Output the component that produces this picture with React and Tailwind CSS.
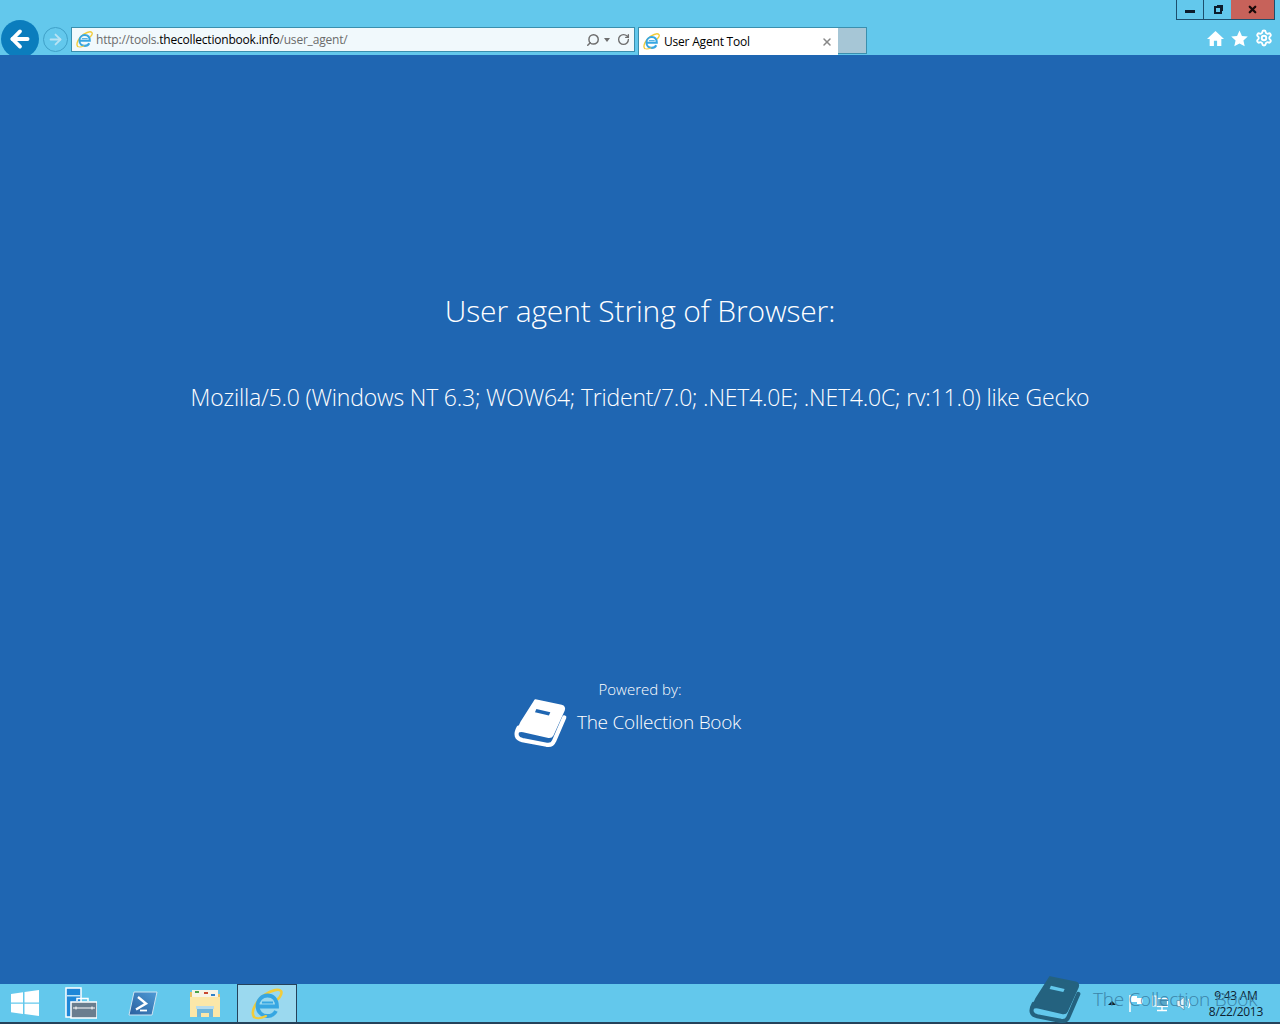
import React from 'react';
import { Search, RotateCw, X, Settings, ArrowLeft, ArrowRight } from 'lucide-react';

const uiFont = "font-['Open_Sans','Noto_Sans',sans-serif]";

const IeIcon = ({ className }) => (
  <svg viewBox="0 0 32 32" className={className}>
    <path d="M3 29 C-1 23 6 12 14 6.500 C21 2 28 0.500 30 3 C31.500 5 29 9 27 11" fill="none" stroke="#f2cc3a" strokeWidth="2.600" strokeLinecap="round" />
    <path d="M7 18.500 H26 C26 11 21.500 7.500 16.500 7.500 C11 7.500 6.500 12 6.500 18 C6.500 24 11 28 16.500 28 C20.500 28 23.500 26 25 23" fill="none" stroke="#36a6e2" strokeWidth="3.800" />
    <path d="M11 14.500 H22" stroke="#36a6e2" strokeWidth="2" />
    <path d="M3 29 C6 31 11 30 15 28" fill="none" stroke="#f2cc3a" strokeWidth="2" strokeLinecap="round" />
  </svg>
);

const BookLogo = ({ className, color, bg }) => (
  <svg viewBox="0 0 64 58" className={className}>
    <path d="M26 5.500 L54 11.500 Q58 12.500 56.500 16.500 L44.500 43 Q43 46 39 45 L13 39 Q8 38 5.500 41 L11 29 Z" fill={color} stroke={color} strokeWidth="2" strokeLinejoin="round" />
    <path d="M27 15 L42 18.500 L40.500 22 L25.500 18.500 Z" fill={bg} />
    <path d="M8 35 Q2 46 12 48.500 L38 53.500 Q44 54.500 46 49.500 L57 24" fill="none" stroke={color} strokeWidth="4.500" strokeLinecap="round" />
  </svg>
);

const WindowsLogo = () => (
  <svg viewBox="0 0 28 26" className="w-[28px] h-[26px]">
    <path d="M0 4 L12 2.200 V12.400 H0 Z M13.500 2 L28 0 V12.400 H13.500 Z M0 13.800 H12 V24 L0 22.200 Z M13.500 13.800 H28 V26 L13.500 24 Z" fill="#fff" />
  </svg>
);

const ServerManager = () => (
  <svg viewBox="0 0 32 32" className="w-[32px] h-[32px]">
    <rect x="1" y="1" width="15" height="29" fill="#1f87d8" stroke="#fff" strokeWidth="1.500" />
    <rect x="2" y="8" width="13" height="1.500" fill="#bfe4f7" />
    <path d="M12 14 V11.500 H23 V14" fill="none" stroke="#fff" strokeWidth="1.500" />
    <rect x="6" y="15" width="26" height="16" fill="#6a7d8e" stroke="#fff" strokeWidth="1.500" />
    <path d="M8 21 H30" stroke="#fff" strokeWidth="1" />
    <path d="M11 19.500 V22.500 M27 19.500 V22.500" stroke="#fff" strokeWidth="1" />
  </svg>
);

const PowerShell = () => (
  <svg viewBox="0 0 30 25" className="w-[30px] h-[25px]">
    <defs>
      <linearGradient id="psFill" x1="0" y1="1" x2="1" y2="0">
        <stop offset="0" stopColor="#2a5f9e" />
        <stop offset="1" stopColor="#4f9bd6" />
      </linearGradient>
    </defs>
    <path d="M6 1 H29 L24 24 H1 Z" fill="url(#psFill)" stroke="#cfe4f2" strokeWidth="1" />
    <path d="M10 6 L18 12.500 L8 18.500" fill="none" stroke="#fff" strokeWidth="2.400" />
    <path d="M12 19.500 H19" stroke="#fff" strokeWidth="1.800" />
  </svg>
);

const ExplorerIcon = () => (
  <svg viewBox="0 0 32 30" className="w-[32px] h-[30px]">
    <path d="M1 4 H11 L13 6 H31 V29 H1 Z" fill="#e9c063" />
    <rect x="3" y="2" width="26" height="8" fill="#f6f3e6" />
    <rect x="6" y="3" width="4" height="2" fill="#4aa34a" />
    <rect x="15" y="4" width="4" height="2" fill="#c9472e" />
    <rect x="22" y="6" width="4" height="2" fill="#2f82c9" />
    <path d="M1 9 H31 V29 H1 Z" fill="#fbe7a8" />
    <path d="M8 29 V21 H24 V29 H20 V25 H12 V29 Z" fill="#6fb7dc" />
    <rect x="7" y="18" width="18" height="3" fill="#b5dcee" />
  </svg>
);

const TrayFlag = () => (
  <svg viewBox="0 0 16 18" className="w-[16px] h-[18px]">
    <path d="M2 1 V18" stroke="#fff" strokeWidth="1.500" />
    <path d="M3 2 H9 V4 H15 V10 H9 V8 H3 Z" fill="#fff" />
  </svg>
);

const TrayNetwork = () => (
  <svg viewBox="0 0 16 17" className="w-[16px] h-[17px]">
    <path d="M1 1 H4 V11 H1 Z" fill="none" stroke="#fff" strokeWidth="1.200" />
    <rect x="5.500" y="3.500" width="10" height="8" fill="#5aa9c9" stroke="#fff" strokeWidth="1.200" />
    <path d="M10 12 V15 M5 15.500 H15" stroke="#fff" strokeWidth="1.400" />
  </svg>
);

const TraySound = () => (
  <svg viewBox="0 0 17 17" className="w-[17px] h-[17px]">
    <path d="M1 5.500 H4 L8 2 V15 L4 11.500 H1 Z" fill="#e8f4fa" stroke="#4a7f9a" strokeWidth="0.600" />
    <path d="M10 5.500 Q12 8.500 10 11.500 M12.500 4 Q15 8.500 12.500 13" fill="none" stroke="#fff" strokeWidth="1.200" />
  </svg>
);

const Toolbar = () => (
  <div className="flex items-start h-[35px] relative">
    {/* back button is cut off by the page below */}
    <div className="ml-px w-[38px] h-[35px] overflow-hidden shrink-0">
      <div className="w-[38px] h-[38px] rounded-full bg-[#0b7dbd] flex items-center justify-center">
        <ArrowLeft className="w-[26px] h-[26px] text-white" strokeWidth={3.5} />
      </div>
    </div>
    <div className="ml-[4px] mt-[7px] w-[25px] h-[25px] rounded-full border border-[#3fa0c8] flex items-center justify-center shrink-0">
      <ArrowRight className="w-[17px] h-[17px] text-[#b9e3f3]" strokeWidth={2.5} />
    </div>
    <div className="ml-[3px] mt-[7px] w-[564px] h-[25px] bg-[#f1f9fc] border border-[#3a8fae] flex items-center shrink-0">
      <IeIcon className="ml-[4px] w-[17px] h-[17px]" />
      <span className="ml-[3px] text-[12px] text-[#6b6b6b] whitespace-nowrap tracking-[-0.2px]">
        http://tools.<span className="text-black">thecollectionbook.info</span>/user_agent/
      </span>
      <div className="ml-auto flex items-center text-[#6e6e6e]">
        <Search className="w-[14px] h-[14px] -scale-x-100" strokeWidth={2.5} />
        <span className="ml-[4px] w-0 h-0 border-x-[3.500px] border-x-transparent border-t-[4px] border-t-[#6e6e6e]" />
        <RotateCw className="ml-[7px] mr-[4px] w-[13px] h-[13px]" strokeWidth={2.5} />
      </div>
    </div>
    <div className="ml-[3px] mt-[7px] w-[200px] h-[28px] bg-white border-l border-t border-[#3a8fae] flex items-center shrink-0">
      <IeIcon className="ml-[4px] w-[17px] h-[17px]" />
      <span className="ml-[4px] text-[12px] text-black whitespace-nowrap tracking-[-0.2px]">User Agent Tool</span>
      <X className="ml-auto mr-[5px] w-[12px] h-[12px] text-[#888]" strokeWidth={3} />
    </div>
    <div className="mt-[7px] w-[29px] h-[27px] bg-[#a6c6d6] border border-l-0 border-[#3a8fae] shrink-0" />
    <div className="ml-auto mr-[7px] mt-[9px] flex items-center gap-[7px]">
      <svg viewBox="0 0 16 16" className="w-[17px] h-[17px]">
        <path d="M8 1 L16 8.500 H13.500 V15 H9.500 V10 H6.500 V15 H2.500 V8.500 H0 Z" fill="#fff" />
      </svg>
      <svg viewBox="0 0 16 16" className="w-[17px] h-[17px]">
        <path d="M8 0.500 L10.300 5.600 L15.800 6.200 L11.700 9.900 L12.900 15.400 L8 12.600 L3.100 15.400 L4.300 9.900 L0.200 6.200 L5.700 5.600 Z" fill="#fff" />
      </svg>
      <Settings className="w-[18px] h-[18px] text-white" strokeWidth={2.5} />
    </div>
  </div>
);

const WindowControls = () => (
  <div className="flex justify-end pr-[5px] h-[20px]">
    <div className="flex h-[20px] border border-t-0 border-[#1c4f6e]">
      <div className="w-[27px] flex items-center justify-center border-r border-[#1c4f6e]">
        <span className="w-[10px] h-[3px] mt-[3px] bg-[#0c1c2c]" />
      </div>
      <div className="w-[27px] flex items-center justify-center">
        <span className="w-[8px] h-[8px] border-2 border-[#0c1c2c] shadow-[2px_-2px_0_-1px_#0c1c2c]" />
      </div>
      <div className="w-[43px] bg-[#c7625a] flex items-center justify-center">
        <X className="w-[11px] h-[11px] text-[#1a0a0a]" strokeWidth={5} />
      </div>
    </div>
  </div>
);

const Taskbar = () => (
  <div className="h-[40px] bg-[#63c8ec] border-b-2 border-[#25425a] flex items-stretch gap-[2px] relative">
    <div className="w-[49px] flex items-center justify-center">
      <WindowsLogo />
    </div>
    <div className="w-[60px] flex items-center justify-center">
      <ServerManager />
    </div>
    <div className="w-[60px] flex items-center justify-center">
      <PowerShell />
    </div>
    <div className="w-[60px] flex items-center justify-center">
      <ExplorerIcon />
    </div>
    <div className="w-[60px] flex items-center justify-center bg-[#9bd9ef] border-x border-t border-[#25425a]">
      <IeIcon className="w-[32px] h-[32px]" />
    </div>
    <div className="ml-auto mr-[17px] flex items-center">
      <span className="w-0 h-0 border-x-[4px] border-x-transparent border-b-[4px] border-b-[#10202c]" />
      <div className="ml-[12px] flex items-center gap-[8px]">
        <TrayFlag />
        <TrayNetwork />
        <TraySound />
      </div>
      <div className="ml-[16px] mt-[2px] flex flex-col items-center text-[12px] leading-[16px] text-[#0e2230] tracking-[-0.3px]">
        <span>9:43 AM</span>
        <span>8/22/2013</span>
      </div>
    </div>
    {/* site watermark sits on top of the taskbar */}
    <div className="absolute left-[1026px] top-[-12px] flex items-center">
      <BookLogo className="w-[59px] h-[53px]" color="#24627f" bg="#63c8ec" />
      <span className="ml-[8px] mt-[2px] text-[19px] tracking-[-0.25px] font-light text-[#3b84a9] whitespace-nowrap">The Collection Book</span>
    </div>
  </div>
);

export default function App() {
  return (
    <div className={`w-[1280px] h-[1024px] flex flex-col overflow-hidden ${uiFont}`}>
      <div className="h-[55px] bg-[#63c8ec] shrink-0">
        <WindowControls />
        <Toolbar />
      </div>
      <main className="flex-1 bg-[#1f66b2] flex flex-col items-center text-white font-light">
        <h1 className="mt-[234px] text-[30px] leading-[44px] tracking-[-0.14px] font-light whitespace-nowrap">User agent String of Browser:</h1>
        <p className="mt-[47px] text-[23px] leading-[34px] tracking-[-0.2px] whitespace-nowrap">
          Mozilla/5.0 (Windows NT 6.3; WOW64; Trident/7.0; .NET4.0E; .NET4.0C; rv:11.0) like Gecko
        </p>
        <p className="mt-[265px] text-[15px] leading-[20px]">Powered by:</p>
        <div className="-mt-[4px] mr-[28px] flex items-center">
          <BookLogo className="w-[60px] h-[54px]" color="#fff" bg="#1f66b2" />
          <span className="ml-[6px] text-[19px] tracking-[-0.25px] leading-[28px]">The Collection Book</span>
        </div>
      </main>
      <Taskbar />
    </div>
  );
}
